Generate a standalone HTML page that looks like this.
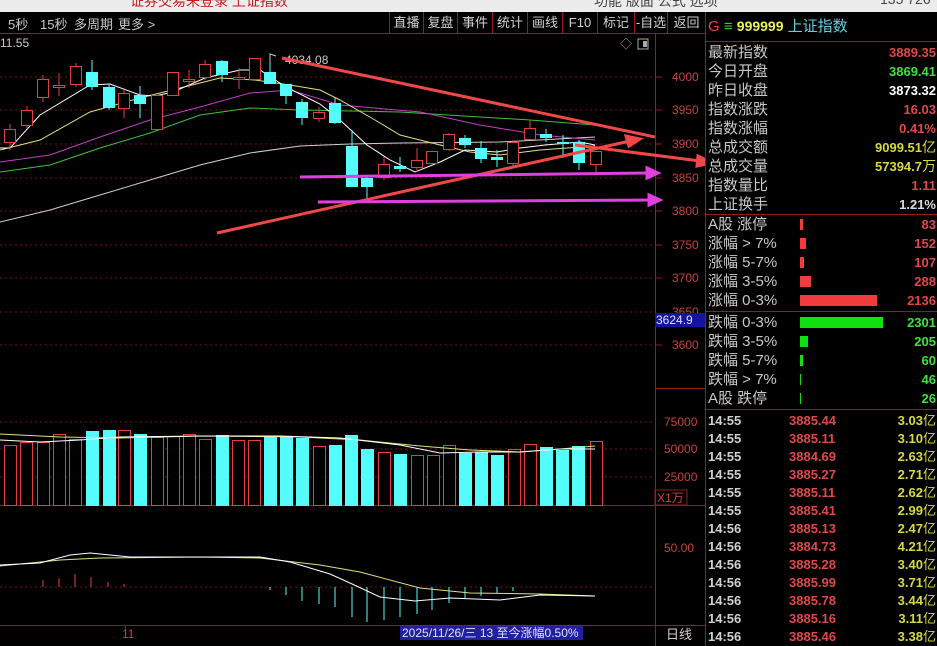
<!DOCTYPE html>
<html><head><meta charset="utf-8"><style>
*{margin:0;padding:0;box-sizing:border-box}
body{width:937px;height:646px;background:#000;overflow:hidden;position:relative;font-family:"Liberation Sans","Noto Sans CJK SC",sans-serif}
.top{position:absolute;left:0;top:0;width:937px;height:12px;background:#ececec;overflow:hidden}
.top span{position:absolute;top:-9px;font-size:14px}
.tb{position:absolute;left:0;top:12px;width:705px;height:22px;border-bottom:1px solid #a01818}
.tb span{position:absolute;top:2px;color:#c8c8c8;font-size:13px}
.btn{position:absolute;top:0;height:22px;border-left:1px solid #a01818;color:#d0d0d0;font-size:13px;line-height:22px;text-align:center}
.rp{position:absolute;left:705px;top:12px;width:232px;height:634px;border-left:1px solid #a01818}
.r{position:absolute;left:2px;width:230px;height:19px;font-size:15px;line-height:19px;color:#c8c8c8}
.r b{position:absolute;right:2px;top:0;font-size:13px;font-weight:bold;font-family:"Liberation Sans","Noto Sans CJK SC",sans-serif}
.hl{position:absolute;left:0;width:232px;height:1px;background:#a01818}
.bar{position:absolute;left:92px;top:4px;height:11px}
.t{position:absolute;left:2px;width:230px;height:18px;font-size:13px;font-weight:bold;line-height:18px}
.t .a{position:absolute;left:0;color:#d0d0d0}
.t .p{position:absolute;left:81px;color:#e04848}
.t .v{position:absolute;right:2px;color:#d8d840}
.t .v i{font-style:normal;font-weight:normal;color:#d8d840}
</style></head><body>
<div class="top"><span style="left:130px;color:#c02020">证券交易未登录 上证指数</span><span style="left:594px;color:#444">功能 版面 公式 选项</span><span style="left:880px;color:#444">135 726</span></div>
<div class="tb">
<span style="left:8px">5秒</span><span style="left:40px">15秒</span><span style="left:74px">多周期</span><span style="left:118px">更多 &gt;</span>
<div class="btn" style="left:389px;width:34px">直播</div>
<div class="btn" style="left:423px;width:34px">复盘</div>
<div class="btn" style="left:457px;width:35px">事件</div>
<div class="btn" style="left:492px;width:35px">统计</div>
<div class="btn" style="left:527px;width:35px">画线</div>
<div class="btn" style="left:562px;width:35px">F10</div>
<div class="btn" style="left:597px;width:37px">标记</div>
<div class="btn" style="left:634px;width:33px">-自选</div>
<div class="btn" style="left:667px;width:38px">返回</div>
</div>
<svg style="position:absolute;left:0;top:34px" width="705" height="612" viewBox="0 34 705 612">
<g stroke="#7a1010" stroke-dasharray="2,3" stroke-width="1">
<line x1="0" y1="77" x2="655" y2="77"/><line x1="0" y1="110" x2="655" y2="110"/><line x1="0" y1="144" x2="655" y2="144"/><line x1="0" y1="178" x2="655" y2="178"/><line x1="0" y1="211" x2="655" y2="211"/><line x1="0" y1="245" x2="655" y2="245"/><line x1="0" y1="278" x2="655" y2="278"/><line x1="0" y1="312" x2="655" y2="312"/><line x1="0" y1="345" x2="655" y2="345"/>
<line x1="0" y1="422" x2="655" y2="422"/><line x1="0" y1="449" x2="655" y2="449"/><line x1="0" y1="477" x2="655" y2="477"/>
<line x1="0" y1="587" x2="655" y2="587"/>
</g>
<g stroke="#a01818"><line x1="655.5" y1="34" x2="655.5" y2="646"/><line x1="0" y1="505.5" x2="705" y2="505.5"/><line x1="0" y1="625.5" x2="705" y2="625.5"/><line x1="655" y1="388.5" x2="705" y2="388.5"/>
<line x1="655" y1="77" x2="662" y2="77"/><line x1="655" y1="110" x2="662" y2="110"/><line x1="655" y1="144" x2="662" y2="144"/><line x1="655" y1="178" x2="662" y2="178"/><line x1="655" y1="211" x2="662" y2="211"/><line x1="655" y1="245" x2="662" y2="245"/><line x1="655" y1="278" x2="662" y2="278"/><line x1="655" y1="345" x2="662" y2="345"/></g>
<g fill="#c84040" font-size="12" font-family="Liberation Sans,sans-serif">
<text x="672" y="81">4000</text><text x="672" y="114">3950</text><text x="672" y="148">3900</text><text x="672" y="182">3850</text><text x="672" y="215">3800</text><text x="672" y="249">3750</text><text x="672" y="282">3700</text><text x="672" y="316">3650</text><text x="672" y="349">3600</text>
<text x="664" y="426">75000</text><text x="664" y="453">50000</text><text x="664" y="481">25000</text><text x="664" y="552">50.00</text>
</g>
<rect x="655" y="490" width="32" height="15" fill="none" stroke="#a01818"/><text x="657" y="502" fill="#c84040" font-size="12" font-family="Liberation Sans,Noto Sans CJK SC,sans-serif">X1万</text>
<rect x="655" y="313" width="50" height="14" fill="#1414a0"/><text x="656" y="324" fill="#e0e0ff" font-size="12" font-family="Liberation Sans,sans-serif">3624.9</text>
<text x="0" y="47" fill="#c8c8c8" font-size="12" font-family="Liberation Sans,sans-serif">11.55</text>
<text x="620" y="48" fill="#aaa" font-size="12">◇</text><rect x="638" y="39" width="10" height="10" fill="none" stroke="#aaa"/><rect x="643" y="41" width="4" height="6" fill="#aaa"/>
<!-- MAs -->
<g fill="none" stroke-width="1">
<polyline stroke="#d0d0d0" points="0,222 50,210 100,195 150,180 200,165 250,153 300,146 350,144 400,143 500,142 595,137"/>
<polyline stroke="#40c040" points="0,172 50,165 100,148 150,133 200,115 250,108 300,110 400,112 480,117 530,120 595,125"/>
<polyline stroke="#c040c0" points="0,162 50,155 100,137 150,120 200,107 250,93 290,90 340,105 420,112 480,125 540,135 595,140"/>
<polyline stroke="#e0e080" points="0,150 40,140 90,112 140,98 180,88 220,78 255,80 290,85 320,90 340,100 375,120 400,135 440,145 470,152 500,155 540,150 595,146"/>
<polyline stroke="#ffffff" points="0,148 10,148 40,115 90,85 110,84 140,95 155,96 173,92 205,78 240,70 260,70 286,87 320,104 340,120 367,145 390,160 415,172 440,162 465,150 497,152 520,148 545,145 580,142 595,145"/>
</g>
<!-- candles -->
<g stroke="#e04040" fill="#000">
<line x1="10" y1="124" x2="10" y2="150"/><rect x="4.5" y="129.5" width="11" height="13"/>
<line x1="27" y1="106" x2="27" y2="129"/><rect x="21.5" y="110.5" width="11" height="15"/>
<line x1="43" y1="75" x2="43" y2="102"/><rect x="37.5" y="79.5" width="11" height="18"/>
<line x1="59" y1="73" x2="59" y2="96"/><rect x="53.5" y="85.5" width="11" height="2"/>
<line x1="76" y1="63" x2="76" y2="87"/><rect x="70.5" y="66.5" width="11" height="18"/>
<line x1="124" y1="90" x2="124" y2="118"/><rect x="118.5" y="93.5" width="11" height="15"/>
<rect x="151.5" y="95.5" width="11" height="34"/>
<rect x="167.5" y="72.5" width="11" height="23"/>
<line x1="189" y1="70" x2="189" y2="88"/><rect x="183.5" y="79.5" width="11" height="2"/>
<line x1="205" y1="60" x2="205" y2="80"/><rect x="199.5" y="64.5" width="11" height="13"/>
<line x1="239" y1="68" x2="239" y2="89"/><rect x="233.5" y="77.5" width="11" height="2"/>
<rect x="249.5" y="58.5" width="11" height="21"/>
<line x1="319" y1="107" x2="319" y2="122"/><rect x="313.5" y="112.5" width="11" height="6"/>
<line x1="384" y1="157" x2="384" y2="180"/><rect x="378.5" y="164.5" width="11" height="13"/>
<line x1="417" y1="148" x2="417" y2="172"/><rect x="411.5" y="160.5" width="11" height="7"/>
<rect x="426.5" y="151.5" width="11" height="12"/>
<line x1="449" y1="133" x2="449" y2="151"/><rect x="443.5" y="134.5" width="11" height="15"/>
<line x1="513" y1="140" x2="513" y2="168"/><rect x="507.5" y="142.5" width="11" height="21"/>
<line x1="530" y1="120" x2="530" y2="139"/><rect x="524.5" y="128.5" width="11" height="11"/>
<line x1="596" y1="151" x2="596" y2="175"/><rect x="590.5" y="151.5" width="11" height="13"/>
</g>
<g stroke="#54fcfc" fill="#54fcfc">
<line x1="92" y1="60" x2="92" y2="90"/><rect x="86.5" y="72.5" width="11" height="14"/>
<line x1="109" y1="85" x2="109" y2="110"/><rect x="103.5" y="87.5" width="11" height="20"/>
<line x1="140" y1="86" x2="140" y2="118"/><rect x="134.5" y="95.5" width="11" height="8"/>
<line x1="222" y1="60" x2="222" y2="82"/><rect x="216.5" y="61.5" width="11" height="13"/>
<line x1="270" y1="55" x2="270" y2="83"/><rect x="264.5" y="72.5" width="11" height="11"/>
<line x1="286" y1="84" x2="286" y2="104"/><rect x="280.5" y="84.5" width="11" height="11"/>
<line x1="302" y1="99" x2="302" y2="125"/><rect x="296.5" y="102.5" width="11" height="15"/>
<line x1="335" y1="98" x2="335" y2="124"/><rect x="329.5" y="103.5" width="11" height="19"/>
<line x1="352" y1="130" x2="352" y2="187"/><rect x="346.5" y="146.5" width="11" height="40"/>
<line x1="367" y1="175" x2="367" y2="200"/><rect x="361.5" y="178.5" width="11" height="8"/>
<line x1="400" y1="157" x2="400" y2="172"/><rect x="394.5" y="166.5" width="11" height="2"/>
<line x1="465" y1="135" x2="465" y2="148"/><rect x="459.5" y="138.5" width="11" height="6"/>
<line x1="481" y1="141" x2="481" y2="163"/><rect x="475.5" y="148.5" width="11" height="10"/>
<line x1="497" y1="150" x2="497" y2="167"/><rect x="491.5" y="157.5" width="11" height="2"/>
<line x1="546" y1="129" x2="546" y2="142"/><rect x="540.5" y="134.5" width="11" height="3"/>
<line x1="563" y1="135" x2="563" y2="158"/><rect x="557.5" y="142.5" width="11" height="1"/>
<line x1="579" y1="140" x2="579" y2="170"/><rect x="573.5" y="142.5" width="11" height="20"/>
</g>
<polyline points="270,62 270,54 276,56" fill="none" stroke="#ccc"/>
<text x="285" y="64" fill="#c8c8c8" font-size="12" font-family="Liberation Sans,sans-serif">4034.08</text>
<!-- annotations -->
<g stroke="#f04848" stroke-width="3" fill="#f04848">
<line x1="282" y1="58" x2="655" y2="137"/>
<line x1="217" y1="233" x2="630" y2="141"/><polygon points="640,139 626,136 629,146"/>
<line x1="575" y1="145" x2="700" y2="161"/><polygon points="712,163 698,156 697,166"/>
</g>
<g stroke="#e040e0" stroke-width="3" fill="#e040e0">
<line x1="300" y1="177" x2="648" y2="173"/><polygon points="658,173 647,168 647,178"/>
<line x1="318" y1="202" x2="650" y2="200"/><polygon points="660,200 649,195 649,205"/>
</g>
<!-- volume -->
<g stroke="#e04040" fill="#000">
<rect x="4.5" y="445.5" width="12" height="60"/><rect x="20.5" y="442.5" width="12" height="63"/><rect x="37.5" y="442.5" width="12" height="63"/><rect x="53.5" y="434.5" width="12" height="71"/><rect x="69.5" y="439.5" width="12" height="66"/>
<rect x="118.5" y="430.5" width="12" height="75"/><rect x="151.5" y="437.5" width="12" height="68"/><rect x="167.5" y="436.5" width="12" height="69"/><rect x="183.5" y="434.5" width="12" height="71"/><rect x="199.5" y="439.5" width="12" height="66"/>
<rect x="232.5" y="440.5" width="12" height="65"/><rect x="248.5" y="440.5" width="12" height="65"/><rect x="313.5" y="446.5" width="12" height="59"/><rect x="378.5" y="452.5" width="12" height="53"/>
<rect x="411.5" y="455.5" width="12" height="50"/><rect x="427.5" y="455.5" width="12" height="50"/><rect x="443.5" y="445.5" width="12" height="60"/><rect x="508.5" y="449.5" width="12" height="56"/><rect x="524.5" y="444.5" width="12" height="61"/><rect x="590.5" y="441.5" width="12" height="64"/>
</g>
<g fill="#54fcfc">
<rect x="86" y="431" width="13" height="75"/><rect x="103" y="430" width="13" height="76"/><rect x="134" y="434" width="13" height="72"/><rect x="216" y="435" width="13" height="71"/>
<rect x="264" y="437" width="13" height="69"/><rect x="280" y="437" width="13" height="69"/><rect x="296" y="438" width="13" height="68"/><rect x="329" y="445" width="13" height="61"/><rect x="345" y="435" width="13" height="71"/><rect x="361" y="449" width="13" height="57"/>
<rect x="394" y="454" width="13" height="52"/><rect x="459" y="453" width="13" height="53"/><rect x="475" y="452" width="13" height="54"/><rect x="491" y="455" width="13" height="51"/><rect x="540" y="447" width="13" height="59"/><rect x="556" y="450" width="13" height="56"/><rect x="572" y="446" width="13" height="60"/>
</g>
<g fill="none">
<polyline stroke="#e0e080" points="0,434 60,437 120,438 200,436 300,437 360,440 420,446 470,450 520,452 560,449 595,446"/>
<polyline stroke="#ffffff" points="0,440 40,442 80,440 120,437 200,436 280,436 340,438 400,445 440,453 480,452 520,452 560,449 595,449"/>
</g>
<!-- MACD -->
<g stroke="#e04040"><line x1="43" y1="587" x2="43" y2="580"/><line x1="59" y1="587" x2="59" y2="578"/><line x1="75" y1="587" x2="75" y2="574"/><line x1="91" y1="587" x2="91" y2="577"/><line x1="108" y1="587" x2="108" y2="582"/><line x1="124" y1="587" x2="124" y2="584"/></g>
<g stroke="#54fcfc"><line x1="270" y1="587" x2="270" y2="590"/><line x1="286" y1="587" x2="286" y2="595"/><line x1="302" y1="587" x2="302" y2="601"/><line x1="319" y1="587" x2="319" y2="604"/><line x1="335" y1="587" x2="335" y2="607"/><line x1="352" y1="587" x2="352" y2="617"/><line x1="367" y1="587" x2="367" y2="622"/><line x1="384" y1="587" x2="384" y2="620"/><line x1="400" y1="587" x2="400" y2="617"/><line x1="417" y1="587" x2="417" y2="614"/><line x1="432" y1="587" x2="432" y2="610"/><line x1="449" y1="587" x2="449" y2="603"/><line x1="465" y1="587" x2="465" y2="599"/><line x1="481" y1="587" x2="481" y2="596"/><line x1="497" y1="587" x2="497" y2="593"/><line x1="513" y1="587" x2="513" y2="591"/></g>
<g fill="none">
<polyline stroke="#e0e080" points="0,566 60,560 100,558 200,557 260,558 320,565 360,572 420,588 470,593 540,594 595,596"/>
<polyline stroke="#ffffff" points="0,565 40,563 70,555 90,553 130,557 200,557 260,557 290,562 330,574 350,583 380,597 415,601 450,598 500,600 540,595 595,596"/>
</g>
<line x1="125.5" y1="626" x2="125.5" y2="630" stroke="#a01818"/>
<text x="122" y="638" fill="#c84040" font-size="12" font-family="Liberation Sans,sans-serif">11</text>
<rect x="400" y="626" width="183" height="14" fill="#2020a0"/>
<text x="402" y="637" fill="#e0e0ff" font-size="12" font-family="Liberation Sans,Noto Sans CJK SC,sans-serif">2025/11/26/三 13 至今涨幅0.50%</text>
<text x="666" y="639" fill="#d0d0d0" font-size="13" font-family="Liberation Sans,Noto Sans CJK SC,sans-serif">日线</text>
</svg>
<div class="rp">
<div style="position:absolute;left:2px;top:3px;font-size:15px;white-space:nowrap"><span style="color:#f04040">G</span> <span style="color:#40c040">≡</span> <b style="color:#f0f060;font-size:14px">999999</b> <span style="color:#60d0e0">上证指数</span></div>
<div class="hl" style="top:29px"></div>
<div class="r" style="top:31px">最新指数<b style="color:#e04848">3889.35</b></div>
<div class="r" style="top:50px">今日开盘<b style="color:#40e040">3869.41</b></div>
<div class="r" style="top:69px">昨日收盘<b style="color:#fff">3873.32</b></div>
<div class="r" style="top:88px">指数涨跌<b style="color:#e04848">16.03</b></div>
<div class="r" style="top:107px">指数涨幅<b style="color:#e04848">0.41%</b></div>
<div class="r" style="top:126px">总成交额<b style="color:#d8d840">9099.51<span style="font-weight:normal;font-size:14px">亿</span></b></div>
<div class="r" style="top:145px">总成交量<b style="color:#d8d840">57394.7<span style="font-weight:normal;font-size:14px">万</span></b></div>
<div class="r" style="top:164px">指数量比<b style="color:#e04848">1.11</b></div>
<div class="r" style="top:183px">上证换手<b style="color:#ddd">1.21%</b></div>
<div class="hl" style="top:202px"></div>
<div class="r" style="top:203px">A股 涨停<div class="bar" style="width:3px;background:#f03c3c"></div><b style="color:#e04848">83</b></div>
<div class="r" style="top:222px">涨幅 &gt; 7%<div class="bar" style="width:6px;background:#f03c3c"></div><b style="color:#e04848">152</b></div>
<div class="r" style="top:241px">涨幅 5-7%<div class="bar" style="width:4px;background:#f03c3c"></div><b style="color:#e04848">107</b></div>
<div class="r" style="top:260px">涨幅 3-5%<div class="bar" style="width:11px;background:#f03c3c"></div><b style="color:#e04848">288</b></div>
<div class="r" style="top:279px">涨幅 0-3%<div class="bar" style="width:77px;background:#f03c3c"></div><b style="color:#e04848">2136</b></div>
<div class="hl" style="top:299px"></div>
<div class="r" style="top:301px">跌幅 0-3%<div class="bar" style="width:83px;background:#10e010"></div><b style="color:#40e040">2301</b></div>
<div class="r" style="top:320px">跌幅 3-5%<div class="bar" style="width:8px;background:#10e010"></div><b style="color:#40e040">205</b></div>
<div class="r" style="top:339px">跌幅 5-7%<div class="bar" style="width:3px;background:#10e010"></div><b style="color:#40e040">60</b></div>
<div class="r" style="top:358px">跌幅 &gt; 7%<div class="bar" style="width:1px;background:#10e010"></div><b style="color:#40e040">46</b></div>
<div class="r" style="top:377px">A股 跌停<div class="bar" style="width:1px;background:#10e010"></div><b style="color:#40e040">26</b></div>
<div class="hl" style="top:397px"></div>
<div class="t" style="top:400px"><span class="a">14:55</span><span class="p">3885.44</span><span class="v">3.03<i>亿</i></span></div>
<div class="t" style="top:418px"><span class="a">14:55</span><span class="p">3885.11</span><span class="v">3.10<i>亿</i></span></div>
<div class="t" style="top:436px"><span class="a">14:55</span><span class="p">3884.69</span><span class="v">2.63<i>亿</i></span></div>
<div class="t" style="top:454px"><span class="a">14:55</span><span class="p">3885.27</span><span class="v">2.71<i>亿</i></span></div>
<div class="t" style="top:472px"><span class="a">14:55</span><span class="p">3885.11</span><span class="v">2.62<i>亿</i></span></div>
<div class="t" style="top:490px"><span class="a">14:55</span><span class="p">3885.41</span><span class="v">2.99<i>亿</i></span></div>
<div class="t" style="top:508px"><span class="a">14:56</span><span class="p">3885.13</span><span class="v">2.47<i>亿</i></span></div>
<div class="t" style="top:526px"><span class="a">14:56</span><span class="p">3884.73</span><span class="v">4.21<i>亿</i></span></div>
<div class="t" style="top:544px"><span class="a">14:56</span><span class="p">3885.28</span><span class="v">3.40<i>亿</i></span></div>
<div class="t" style="top:562px"><span class="a">14:56</span><span class="p">3885.99</span><span class="v">3.71<i>亿</i></span></div>
<div class="t" style="top:580px"><span class="a">14:56</span><span class="p">3885.78</span><span class="v">3.44<i>亿</i></span></div>
<div class="t" style="top:598px"><span class="a">14:56</span><span class="p">3885.16</span><span class="v">3.11<i>亿</i></span></div>
<div class="t" style="top:616px"><span class="a">14:56</span><span class="p">3885.46</span><span class="v">3.38<i>亿</i></span></div>
</div>
</body></html>
